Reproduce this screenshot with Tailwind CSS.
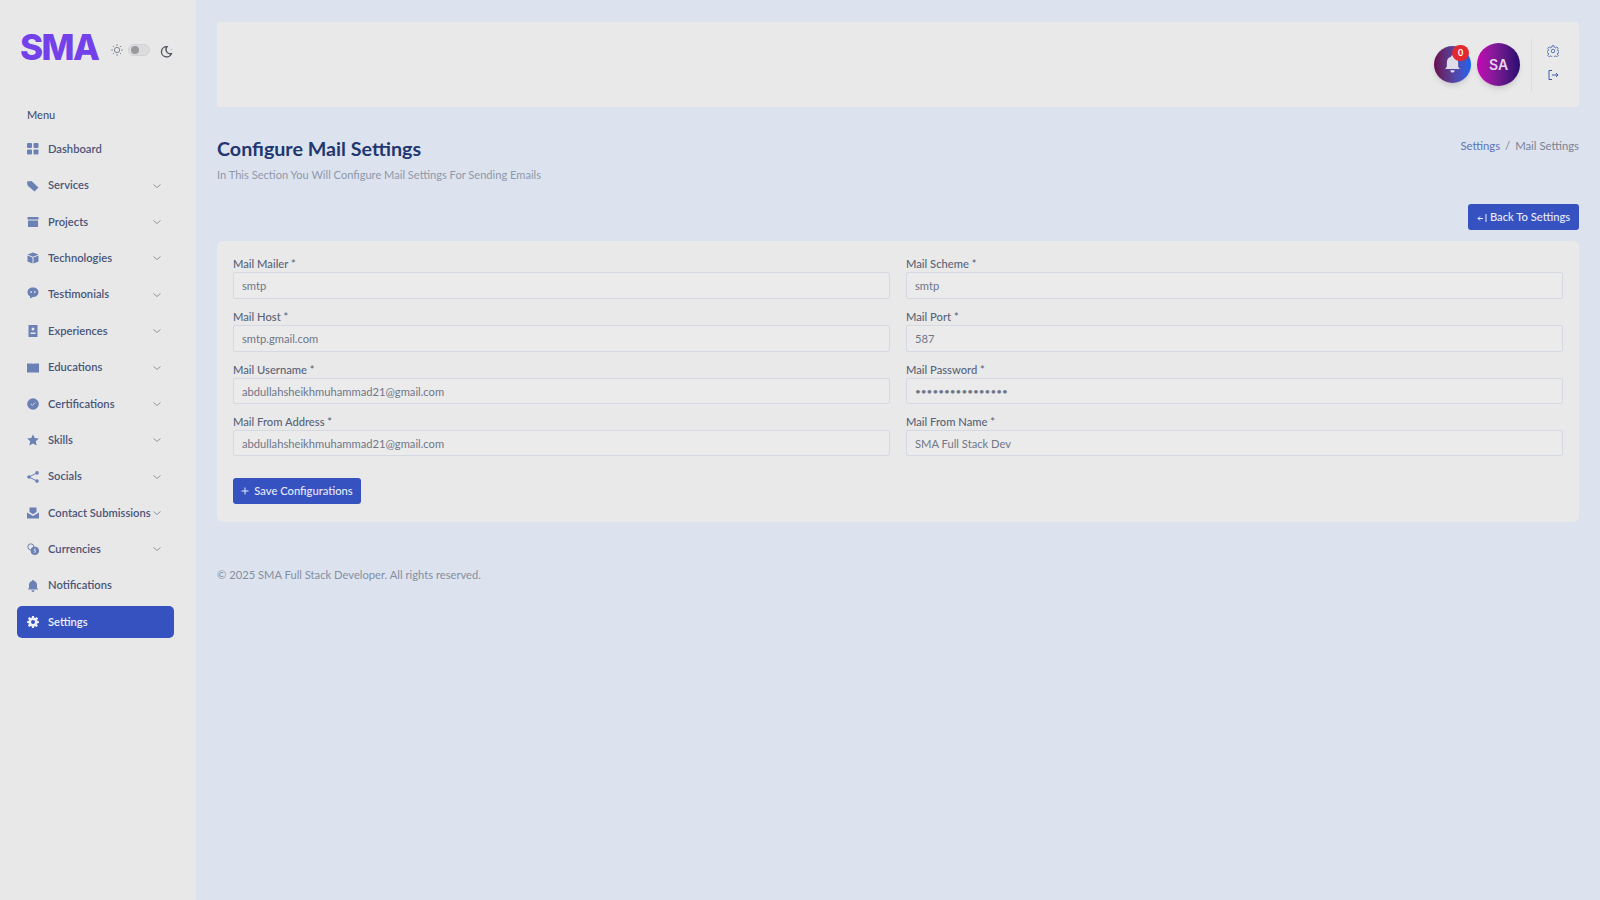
<!DOCTYPE html>
<html lang="en">
<head>
    <meta charset="UTF-8">
    <meta name="viewport" content="width=device-width, initial-scale=1.0">
    <title>Mail Settings</title>
    <script src="https://cdn.jsdelivr.net/npm/@tailwindcss/browser@4"></script>
</head>
<body class="bg-[#dce3ee] font-['Lato','Open_Sans',sans-serif] h-[900px] overflow-hidden flex text-[#46506f]">

    <!-- sidebar -->
    <aside class="w-[196px] h-[900px] shrink-0 bg-[#e8e8e9] flex flex-col">
        <div class="h-[94px] pl-[20px] flex items-center">
            <span class="font-['Inter',sans-serif] text-[35px] font-extrabold tracking-[-1.5px] text-[#7341ea] leading-none">SMA</span>
            <svg class="w-[14px] h-[14px] ml-[11px] mt-[6px] text-[#747a85]" viewBox="0 0 24 24" fill="none" stroke="currentColor" stroke-width="1.5"><circle cx="12" cy="12" r="4.5"/><path d="M12 2v3M12 19v3M2 12h3M19 12h3M5 5l2 2M17 17l2 2M5 19l2-2M17 7l2-2"/></svg>
            <span class="w-[22px] h-[12px] ml-[4px] mt-[6px] rounded-full bg-[#dcdcde] border border-[#d2d2d5] flex items-center pl-[2px]"><span class="w-[8px] h-[8px] rounded-full bg-[#9a9a9e]"></span></span>
            <svg class="w-[13px] h-[13px] ml-[10px] mt-[8px] text-[#4a5260]" viewBox="0 0 24 24" fill="none" stroke="currentColor" stroke-width="2.4"><path d="M13 3a9.500 9.500 0 1 0 8 13 8 8 0 0 1-8-13z"/><path d="M17 4v.1M21 8v.1M18 10v.1" stroke-width="3"/></svg>
        </div>

        <p class="pl-[27px] mt-[13px] text-[11px] leading-[16px] font-medium text-[#48516f]">Menu</p>

        <nav class="mt-[8px] pl-[17px] w-[174px] flex flex-col text-[11.2px] font-semibold text-[#4a5578]">
            <a class="h-[36.4px] flex items-center pl-[10px]">
                <svg class="w-[12px] h-[12px] shrink-0 mr-[9px] text-[#6b80b5]" viewBox="0 0 12 12" fill="currentColor"><rect width="5" height="5" rx="1"/><rect x="6.5" width="5" height="5" rx="1"/><rect y="6.5" width="5" height="5" rx="1"/><rect x="6.5" y="6.5" width="5" height="5" rx="1"/></svg>
                <span>Dashboard</span>
            </a>
            <a class="h-[36.4px] flex items-center pl-[10px]">
                <svg class="w-[12px] h-[12px] shrink-0 mr-[9px] text-[#6b80b5]" viewBox="0 0 12 12" fill="currentColor"><path d="M0 1.500 4.500 1 11.500 7.500 7.500 11.500 .5 5.500z"/></svg>
                <span class="flex-1">Services</span>
                <svg class="w-[10px] h-[10px] shrink-0 mr-[12px] text-[#8f95a3]" viewBox="0 0 10 10" fill="none" stroke="currentColor"><path d="M1.500 3.500 5 6.500 8.500 3.500"/></svg>
            </a>
            <a class="h-[36.4px] flex items-center pl-[10px]">
                <svg class="w-[12px] h-[12px] shrink-0 mr-[9px] text-[#6b80b5]" viewBox="0 0 12 12" fill="currentColor"><path d="M.5 1h11v2.500H.5zM1 4.500h10V11H1z"/></svg>
                <span class="flex-1">Projects</span>
                <svg class="w-[10px] h-[10px] shrink-0 mr-[12px] text-[#8f95a3]" viewBox="0 0 10 10" fill="none" stroke="currentColor"><path d="M1.500 3.500 5 6.500 8.500 3.500"/></svg>
            </a>
            <a class="h-[36.4px] flex items-center pl-[10px]">
                <svg class="w-[12px] h-[12px] shrink-0 mr-[9px] text-[#6b80b5]" viewBox="0 0 12 12" fill="currentColor"><path d="M6 .5 11.500 2.500 6 4.800 .5 2.500zM.5 3.500 5.500 5.600V11.500L.5 9.500zM11.500 3.500 6.500 5.600V11.500L11.500 9.500z"/></svg>
                <span class="flex-1">Technologies</span>
                <svg class="w-[10px] h-[10px] shrink-0 mr-[12px] text-[#8f95a3]" viewBox="0 0 10 10" fill="none" stroke="currentColor"><path d="M1.500 3.500 5 6.500 8.500 3.500"/></svg>
            </a>
            <a class="h-[36.4px] flex items-center pl-[10px]">
                <svg class="w-[12px] h-[12px] shrink-0 mr-[9px] -mt-[4px] text-[#6b80b5]" viewBox="0 0 12 12"><path fill="currentColor" d="M6 .5c3.200 0 5.500 2 5.500 4.700S9.200 10 6 10L3 11.500V9.300C1.400 8.500.5 7 .5 5.200.5 2.500 2.800.5 6 .5z"/><path d="M3.500 4.200h1.500v1.500h-1.500zM7 4.200h1.500v1.500H7z" fill="#e8e8e9"/></svg>
                <span class="flex-1">Testimonials</span>
                <svg class="w-[10px] h-[10px] shrink-0 mr-[12px] text-[#8f95a3]" viewBox="0 0 10 10" fill="none" stroke="currentColor"><path d="M1.500 3.500 5 6.500 8.500 3.500"/></svg>
            </a>
            <a class="h-[36.4px] flex items-center pl-[10px]">
                <svg class="w-[12px] h-[12px] shrink-0 mr-[9px] text-[#6b80b5]" viewBox="0 0 12 12" fill="currentColor" fill-rule="evenodd"><path d="M1.500 0h9v12h-9zM6 2.500a1.500 1.500 0 1 0 0 3 1.500 1.500 0 0 0 0-3zM3.500 7.500v1.500h5V7.500z"/></svg>
                <span class="flex-1">Experiences</span>
                <svg class="w-[10px] h-[10px] shrink-0 mr-[12px] text-[#8f95a3]" viewBox="0 0 10 10" fill="none" stroke="currentColor"><path d="M1.500 3.500 5 6.500 8.500 3.500"/></svg>
            </a>
            <a class="h-[36.4px] flex items-center pl-[10px]">
                <svg class="w-[12px] h-[12px] shrink-0 mr-[9px] text-[#6b80b5]" viewBox="0 0 12 12" fill="currentColor"><path d="M0 1.500h5.500L6 2.200l.5-.7H12v9H0z"/></svg>
                <span class="flex-1">Educations</span>
                <svg class="w-[10px] h-[10px] shrink-0 mr-[12px] text-[#8f95a3]" viewBox="0 0 10 10" fill="none" stroke="currentColor"><path d="M1.500 3.500 5 6.500 8.500 3.500"/></svg>
            </a>
            <a class="h-[36.4px] flex items-center pl-[10px]">
                <svg class="w-[12px] h-[12px] shrink-0 mr-[9px] text-[#6b80b5]" viewBox="0 0 12 12"><circle cx="6" cy="6" r="5.800" fill="currentColor"/><path d="M3.800 6 5.400 7.500 8.200 4.500" fill="none" stroke="#e8e8e9" stroke-width=".8"/></svg>
                <span class="flex-1">Certifications</span>
                <svg class="w-[10px] h-[10px] shrink-0 mr-[12px] text-[#8f95a3]" viewBox="0 0 10 10" fill="none" stroke="currentColor"><path d="M1.500 3.500 5 6.500 8.500 3.500"/></svg>
            </a>
            <a class="h-[36.4px] flex items-center pl-[10px]">
                <svg class="w-[12px] h-[12px] shrink-0 mr-[9px] text-[#6b80b5]" viewBox="0 0 12 12" fill="currentColor"><path d="M6 .3 7.700 4 11.800 4.500 8.800 7.300 9.600 11.400 6 9.400 2.400 11.400 3.200 7.300.2 4.500 4.300 4z"/></svg>
                <span class="flex-1">Skills</span>
                <svg class="w-[10px] h-[10px] shrink-0 mr-[12px] text-[#8f95a3]" viewBox="0 0 10 10" fill="none" stroke="currentColor"><path d="M1.500 3.500 5 6.500 8.500 3.500"/></svg>
            </a>
            <a class="h-[36.4px] flex items-center pl-[10px]">
                <svg class="w-[12px] h-[12px] shrink-0 mr-[9px] text-[#6b80b5]" viewBox="0 0 12 12" fill="currentColor"><circle cx="2" cy="6" r="1.800"/><circle cx="10" cy="1.900" r="1.800"/><circle cx="10" cy="10.100" r="1.800"/><path d="M2 6 10 1.900M2 6l8 4.100" stroke="currentColor" stroke-width="1"/></svg>
                <span class="flex-1">Socials</span>
                <svg class="w-[10px] h-[10px] shrink-0 mr-[12px] text-[#8f95a3]" viewBox="0 0 10 10" fill="none" stroke="currentColor"><path d="M1.500 3.500 5 6.500 8.500 3.500"/></svg>
            </a>
            <a class="h-[36.4px] flex items-center pl-[10px]">
                <svg class="w-[12px] h-[12px] shrink-0 mr-[9px] text-[#6b80b5]" viewBox="0 0 12 12" fill="currentColor"><path d="M2.500.5h7V5L6 7.200 2.500 5zM0 5.500 6 9l6-3.500v6H0z"/></svg>
                <span class="flex-1 whitespace-nowrap">Contact Submissions</span>
                <svg class="w-[10px] h-[10px] shrink-0 mr-[12px] text-[#8f95a3]" viewBox="0 0 10 10" fill="none" stroke="currentColor"><path d="M1.500 3.500 5 6.500 8.500 3.500"/></svg>
            </a>
            <a class="h-[36.4px] flex items-center pl-[10px]">
                <svg class="w-[12px] h-[12px] shrink-0 mr-[9px] text-[#6b80b5]" viewBox="0 0 12 12" fill="none" stroke="currentColor"><circle cx="3.800" cy="3.800" r="3"/><circle cx="7.800" cy="7.800" r="3.800" fill="currentColor"/><path d="M9 6.200H7.200v1.500h1.300v1.500H6.700" stroke="#e8e8e9" stroke-width=".7"/></svg>
                <span class="flex-1">Currencies</span>
                <svg class="w-[10px] h-[10px] shrink-0 mr-[12px] text-[#8f95a3]" viewBox="0 0 10 10" fill="none" stroke="currentColor"><path d="M1.500 3.500 5 6.500 8.500 3.500"/></svg>
            </a>
            <a class="h-[36.4px] flex items-center pl-[10px]">
                <svg class="w-[12px] h-[12px] shrink-0 mr-[9px] text-[#6b80b5]" viewBox="0 0 12 12" fill="currentColor"><path d="M6 0c.6 0 1 .4 1 1 2 .5 3 2 3 4v3l1.200 1.500H.8L2 8V5c0-2 1-3.500 3-4 0-.6.4-1 1-1zM4.500 10.300h3C7.500 11.300 6.800 12 6 12s-1.500-.7-1.500-1.700z"/></svg>
                <span>Notifications</span>
            </a>
            <a class="h-[32px] mt-[2px] flex items-center pl-[10px] rounded-[5px] bg-[#3651c0] text-[#eef1fb]">
                <svg class="w-[12px] h-[12px] shrink-0 mr-[9px]" viewBox="0 0 24 24" fill="currentColor" fill-rule="evenodd"><path d="M10 0h4l.6 3.300 2 .8 2.800-1.900 2.800 2.800-1.900 2.800.8 2L24 10.500v3.500l-3.300.6-.8 2 1.900 2.800-2.800 2.800-2.800-1.900-2 .8L14 24h-4l-.6-3.300-2-.8-2.800 1.900-2.800-2.800 1.900-2.800-.8-2L0 14v-3.500l3.100-.6.800-2L2 5 4.800 2.200l2.800 1.900 2-.8zM12 8a4 4 0 1 0 0 8 4 4 0 0 0 0-8z"/></svg>
                <span>Settings</span>
            </a>
        </nav>
    </aside>

    <!-- main -->
    <main class="flex-1 pl-[21px] pr-[21px] pt-[22px]">
        <header class="h-[85px] bg-[#e9e9ea] rounded-[4px] flex items-center justify-end pr-[6px]">
            <div class="relative w-[37px] h-[37px] rounded-full bg-linear-to-r from-[#67064f] to-[#0663f0] shadow-md flex items-center justify-center">
                <svg class="w-[17px] h-[19px] text-[#dcdde8]" viewBox="0 0 12 13" fill="currentColor"><path d="M6 0c.6 0 1 .4 1 1 2 .5 3 2 3 4v3l1.200 1.700H.8L2 8V5c0-2 1-3.500 3-4 0-.6.4-1 1-1zM4.500 10.500h3C7.500 11.500 6.800 12.200 6 12.200s-1.500-.7-1.500-1.700z"/></svg>
                <span class="absolute -top-[1px] right-[2px] w-[17px] h-[16px] rounded-full bg-[#e2292f] text-white text-[9px] font-bold flex items-center justify-center">0</span>
            </div>
            <div class="w-[43px] h-[43px] ml-[6px] -mt-[1px] rounded-full bg-linear-to-r from-[#c600b4] to-[#2a0a6e] shadow-md flex items-center justify-center text-[14px] font-semibold text-[#e9d5ee] font-['Inter',sans-serif]">SA</div>
            <div class="w-px h-[52px] bg-[#dcdcde] ml-[11px]"></div>
            <div class="w-[41px] -mt-[3px] flex flex-col items-center gap-[12px]">
                <svg class="w-[12px] h-[12px] text-[#5c75b8]" viewBox="0 0 24 24" fill="none" stroke="currentColor" stroke-width="2"><path d="M10 1.500h4l.6 3 2.400 1 2.600-1.700 2.800 2.800-1.700 2.600 1 2.400 2.800.6v3l-2.800.6-1 2.400 1.700 2.600-2.800 2.800-2.600-1.700-2.400 1-.6 2.600h-4l-.6-2.600-2.400-1-2.600 1.700-2.800-2.800 1.700-2.600-1-2.400-2.800-.6v-3l2.800-.6 1-2.400-1.700-2.600 2.800-2.800 2.600 1.700 2.400-1z"/><circle cx="12" cy="12" r="3.500"/></svg>
                <svg class="w-[12px] h-[12px] text-[#3f5aa5]" viewBox="0 0 24 24" fill="none" stroke="currentColor" stroke-width="2"><path d="M10 3H4v18h6M10 12h12M18 8l4 4-4 4"/></svg>
            </div>
        </header>

        <div class="mt-[22px] flex justify-between items-start">
            <div>
                <h1 class="text-[19.7px] leading-[40px] font-bold text-[#22376f]">Configure Mail Settings</h1>
                <p class="text-[11.1px] leading-[14px] -mt-[1px] text-[#8e99ab]">In This Section You Will Configure Mail Settings For Sending Emails</p>
            </div>
            <div class="text-[11.3px] leading-[16px] mt-[9px] flex gap-[4px]">
                <span class="text-[#5a74b8]">Settings</span>
                <span class="text-[#7c8494] mx-[1px]">/</span>
                <span class="text-[#7c8494]">Mail Settings</span>
            </div>
        </div>

        <div class="flex justify-end mt-[22px]">
            <button class="h-[26px] w-[111px] rounded-[3px] bg-[#3651c0] text-[#e8ecf8] text-[11.2px] font-medium flex items-center justify-center gap-[3px]">
                <svg class="w-[10px] h-[10px] mt-[1px]" viewBox="0 0 10 10" fill="none" stroke="currentColor"><path d="M9 1v8M6 5.500H1M3 3.500 1 5.500 3 7.500"/></svg>
                Back To Settings
            </button>
        </div>

        <form class="mt-[11px] h-[281px] bg-[#e9e9ea] rounded-[6px] px-[16px] pt-[15px]">
            <div class="grid grid-cols-2 gap-x-[16px] text-[11.2px]">
                <div class="h-[53px]">
                    <label class="block leading-[16px] font-medium text-[#5a6478]">Mail Mailer *</label>
                    <input value="smtp" class="w-full h-[27px] px-[8px] border border-[#d4d9e3] rounded-[2px] bg-[#ebebec] text-[#6f7788] outline-none">
                </div>
                <div class="h-[53px]">
                    <label class="block leading-[16px] font-medium text-[#5a6478]">Mail Scheme *</label>
                    <input value="smtp" class="w-full h-[27px] px-[8px] border border-[#d4d9e3] rounded-[2px] bg-[#ebebec] text-[#6f7788] outline-none">
                </div>
                <div class="h-[53px]">
                    <label class="block leading-[16px] font-medium text-[#5a6478]">Mail Host *</label>
                    <input value="smtp.gmail.com" class="w-full h-[27px] px-[8px] border border-[#d4d9e3] rounded-[2px] bg-[#ebebec] text-[#6f7788] outline-none">
                </div>
                <div class="h-[53px]">
                    <label class="block leading-[16px] font-medium text-[#5a6478]">Mail Port *</label>
                    <input value="587" class="w-full h-[27px] px-[8px] border border-[#d4d9e3] rounded-[2px] bg-[#ebebec] text-[#6f7788] outline-none">
                </div>
                <div class="h-[52px]">
                    <label class="block leading-[16px] font-medium text-[#5a6478]">Mail Username *</label>
                    <input value="abdullahsheikhmuhammad21@gmail.com" class="w-full h-[26px] px-[8px] border border-[#d4d9e3] rounded-[2px] bg-[#ebebec] text-[#6f7788] outline-none">
                </div>
                <div class="h-[52px]">
                    <label class="block leading-[16px] font-medium text-[#5a6478]">Mail Password *</label>
                    <input type="password" value="abcdefghijklmnop" class="w-full h-[26px] px-[8px] border border-[#d4d9e3] rounded-[2px] bg-[#ebebec] text-[10px] text-[#6f7788] outline-none">
                </div>
                <div>
                    <label class="block leading-[16px] font-medium text-[#5a6478]">Mail From Address *</label>
                    <input value="abdullahsheikhmuhammad21@gmail.com" class="w-full h-[26px] px-[8px] border border-[#d4d9e3] rounded-[2px] bg-[#ebebec] text-[#6f7788] outline-none">
                </div>
                <div>
                    <label class="block leading-[16px] font-medium text-[#5a6478]">Mail From Name *</label>
                    <input value="SMA Full Stack Dev" class="w-full h-[26px] px-[8px] border border-[#d4d9e3] rounded-[2px] bg-[#ebebec] text-[#6f7788] outline-none">
                </div>
            </div>
            <button type="button" class="mt-[22px] h-[26px] w-[128px] rounded-[3px] bg-[#3651c0] text-[#e8ecf8] text-[11.2px] font-medium flex items-center justify-center gap-[5px]">
                <svg class="w-[8px] h-[8px]" viewBox="0 0 8 8" fill="none" stroke="currentColor"><path d="M4 .5v7M.5 4h7"/></svg>
                Save Configurations
            </button>
        </form>

        <p class="mt-[45px] text-[11.2px] leading-[16px] text-[#858fa2]">© 2025 SMA Full Stack Developer. All rights reserved.</p>
    </main>

</body>
</html>
